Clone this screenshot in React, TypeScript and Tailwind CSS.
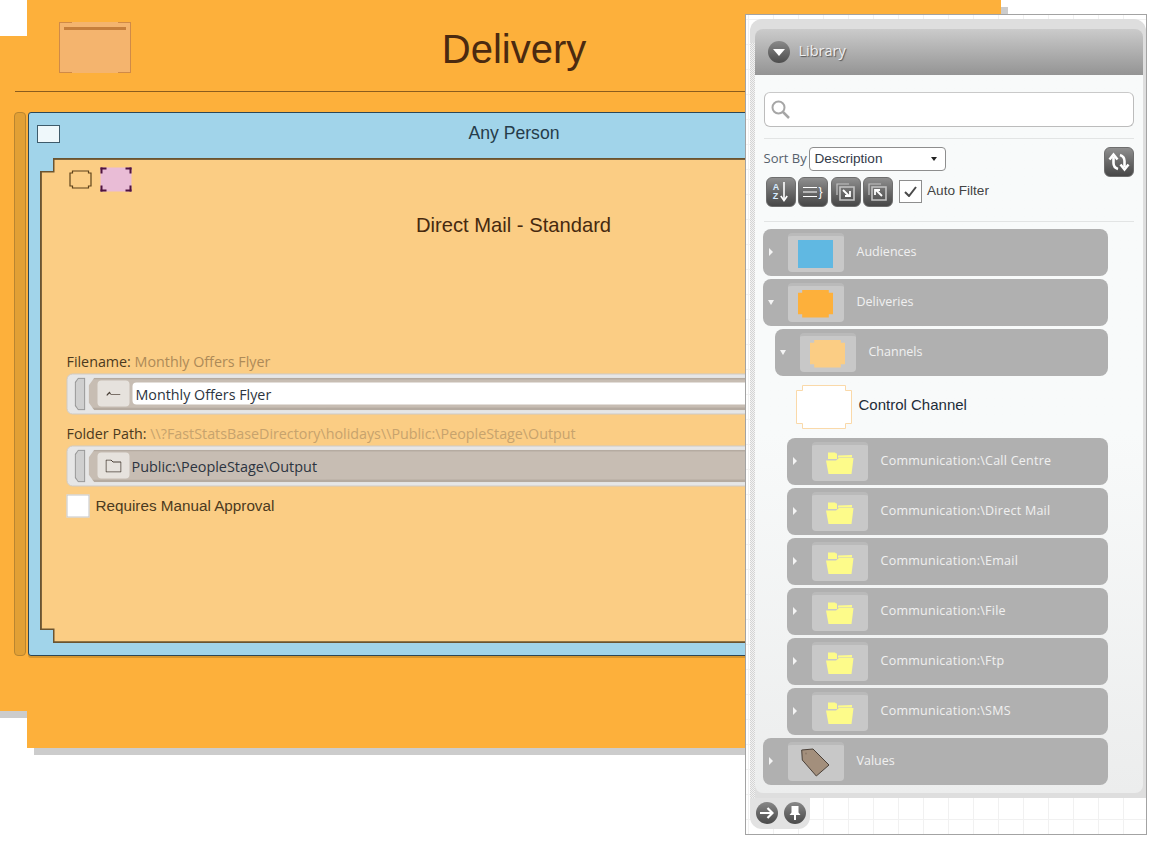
import React from "react";

const uiFont = "font-['Open_Sans','Noto_Sans',sans-serif]";
const arial = "font-['Liberation_Sans',Arial,sans-serif]";

const chamfer8 = "[clip-path:polygon(12%_0,88%_0,88%_12%,100%_12%,100%_88%,88%_88%,88%_100%,12%_100%,12%_88%,0_88%,0_12%,12%_12%)]";

function FolderIcon() {
  return (
    <svg width="28" height="22" viewBox="0 0 28 22">
      <path d="M2 .5h7l1 1h1v5.5H2z" fill="#fdfb8a" />
      <path d="M12 3.500l14-.5v2.500H12z" fill="#fdfb8a" />
      <path d="M0 8.500h10L13 6h14.500L25.500 22h-23z" fill="#fdfb8a" />
    </svg>
  );
}

function TagIcon() {
  return (
    <svg width="30" height="30" viewBox="0 0 30 30">
      <path d="M.7 2L12 1l16 16-12.700 11-14-16z" fill="#a38f7c" stroke="#4a4038" strokeWidth="1" />
      <circle cx="5" cy="5.500" r="1" fill="#8d7a69" />
    </svg>
  );
}

type RowProps = {
  label: string;
  indent?: number;
  open?: boolean;
  children: React.ReactNode;
};

function TreeRow({ label, indent = 0, open, children }: RowProps) {
  const indentClass = indent === 2 ? "ml-[24px] w-[321px]" : indent === 1 ? "ml-[12px] w-[333px]" : "w-[345px]";
  return (
    <div className={`${indentClass} h-[47px] shrink-0 rounded-lg bg-[#b0b0b0] flex items-center`}>
      <div className="w-[25px] flex justify-start shrink-0">
        {open ? (
          <div className="ml-[5px] w-0 h-0 border-x-[3.5px] border-x-transparent border-t-[5px] border-t-[#f4f4f4]" />
        ) : (
          <div className="ml-[6px] w-0 h-0 border-y-[4px] border-y-transparent border-l-[4px] border-l-[#f4f4f4]" />
        )}
      </div>
      <div className="w-[56px] h-[39px] shrink-0 rounded bg-[#c8c8c8] border-t-[3px] border-t-[#bababa] flex items-center justify-center">
        {children}
      </div>
      <span className={`ml-[13px] text-[12.5px] text-[#f0f0f0] ${indent === 2 ? "tracking-[0.26px]" : ""} ${uiFont}`}>{label}</span>
    </div>
  );
}

function DarkButton({ children }: { children: React.ReactNode }) {
  return (
    <div className="w-[30px] h-[30px] rounded-md bg-gradient-to-b from-[#8f8f8f] via-[#696969] to-[#474747] border border-[#6e6e6e] flex items-center justify-center text-white relative">
      {children}
    </div>
  );
}

function FieldBox({ children }: { children: React.ReactNode }) {
  return (
    <div className="h-[41px] w-[920px] rounded-md bg-[#e6e6e6] border border-[#cfcac4] flex items-center pl-[7px] gap-[3px]">
      <div className="w-[11px] h-[33px] bg-[#9a9a9a] [clip-path:polygon(35%_0,100%_0,100%_100%,35%_100%,0_85%,0_15%)] p-[1px]">
        <div className="w-full h-full bg-[#cfcfcf] [clip-path:polygon(35%_0,100%_0,100%_100%,35%_100%,0_85%,0_15%)]" />
      </div>
      <div className="flex-1 h-[33px] bg-[#c7bdb3] border-b-[3px] border-t-[2px] border-[#b5aba1] rounded-r flex items-center pl-[9px] [clip-path:polygon(6px_0,100%_0,100%_100%,6px_100%,0_75%,0_25%)]">
        {children}
      </div>
    </div>
  );
}

function CanvasNode() {
  const nodeShape =
    "[clip-path:polygon(34px_0,100%_0,100%_100%,34px_100%,34px_711px,0_711px,0_36px,34px_36px)]";
  return (
    <div className="absolute left-[-7px] top-0 w-[1008px] h-[748px]">
      <div className={`absolute left-[7px] top-[7px] w-[1008px] h-[748px] bg-[#cccccc] ${nodeShape}`} />
      <div className={`absolute inset-0 bg-[#fdb03b] pl-[22px] ${nodeShape}`}>
        <div className="h-[92px] border-b border-b-[#8a5c1e] flex items-center relative">
          <div className="ml-[44px] mt-[4px] w-[72px] h-[51px] bg-[#f4b46e] border-x border-x-[#cf8a48] pt-[5px] px-[4px] relative">
            <div className="h-[3px] bg-[#c67f3c]" />
            <div className="absolute left-0 top-0 w-[12px] border-t border-t-[#cf8a48]" />
            <div className="absolute right-0 top-0 w-[12px] border-t border-t-[#cf8a48]" />
            <div className="absolute left-0 bottom-0 w-[12px] border-t border-t-[#cf8a48]" />
            <div className="absolute right-0 bottom-0 w-[12px] border-t border-t-[#cf8a48]" />
          </div>
          <h1 className={`absolute left-[12px] right-[0px] text-center text-[40px] leading-none pt-[7px] text-[#4b2a10] ${arial}`}>
            Delivery
          </h1>
        </div>
        <div className="mt-[20px] flex items-start">
          <div className="ml-[-1px] w-[12px] h-[544px] rounded-[4px] bg-[#e2a035] border border-[#b98530]" />
          <div className="ml-[2px] w-[972px] h-[544px] rounded-[3px] bg-[#a1d4ea] border-[1.5px] border-[#2d4756] shadow-[0_2px_0_#d8962f]">
            <div className="h-[45px] relative flex items-center pl-[8px]">
              <div className="w-[23px] h-[18px] bg-[#eff8fb] border-[1.5px] border-[#3e5b6b] mt-[-4px]" />
              <div className={`absolute inset-x-0 top-[10px] text-center text-[17.6px] leading-[20px] text-[#263c4a] ${arial}`}>
                Any Person
              </div>
            </div>
            <div className="ml-[11px] w-[947px] h-[485px] bg-[#6b5430] [clip-path:polygon(13px_0,100%_0,100%_100%,13px_100%,13px_calc(100%-13px),0_calc(100%-13px),0_13px,13px_13px)]">
              <div className="w-full h-full pl-[25px] bg-[#fbcd84] translate-x-[1.5px] translate-y-[1.5px] [clip-path:polygon(13px_0,100%_0,100%_calc(100%-3px),13px_calc(100%-3px),13px_calc(100%-16px),0_calc(100%-16px),0_13px,13px_13px)]">
                <div className="pt-[7px] flex items-center gap-[8px] h-[33px]">
                  <svg width="24" height="20" viewBox="0 0 24 20" className="ml-[2px]" fill="none" stroke="#5f431a" strokeWidth="1.2">
                    <path d="M4 1.500h16v2h2.500v13H20v2H4v-2H1.500v-13H4z" />
                  </svg>
                  <div className="w-[31px] h-[24px] bg-[#e9bcd6] relative">
                    <div className="absolute left-0 top-0 w-[6px] h-[6px] border-l-2 border-t-2 border-[#4f1340]" />
                    <div className="absolute right-0 top-0 w-[6px] h-[6px] border-r-2 border-t-2 border-[#4f1340]" />
                    <div className="absolute left-0 bottom-0 w-[6px] h-[6px] border-l-2 border-b-2 border-[#4f1340]" />
                    <div className="absolute right-0 bottom-0 w-[6px] h-[6px] border-r-2 border-b-2 border-[#4f1340]" />
                  </div>
                </div>
                <div className={`mt-[20px] ml-[-28px] text-center text-[20.2px] leading-[24px] text-[#46290f] ${arial}`}>
                  Direct Mail - Standard
                </div>
                <div className={`mt-[115px] text-[14.3px] leading-[19px] text-[#4b3a20] ${uiFont}`}>
                  Filename: <span className="text-[#ad8a58]">Monthly Offers Flyer</span>
                </div>
                <div className="mt-[3px]">
                  <FieldBox>
                    <div className="w-[32px] h-[26px] rounded-sm bg-[#e6e2dd] flex items-center justify-center shrink-0">
                      <svg width="14" height="6" viewBox="0 0 14 6">
                        <path d="M0 5l3-3 1 1.500" fill="none" stroke="#4a4038" strokeWidth="1.2" />
                        <path d="M4 4h10" stroke="#7a7068" strokeWidth="1" />
                      </svg>
                    </div>
                    <div className={`ml-[3px] flex-1 h-[22px] bg-white rounded-l-sm pl-[3px] text-[14.3px] leading-[24px] text-[#2c3440] ${uiFont}`}>
                      Monthly Offers Flyer
                    </div>
                  </FieldBox>
                </div>
                <div className={`mt-[9px] text-[14.3px] leading-[19px] text-[#4b3a20] ${uiFont}`}>
                  Folder Path: <span className="text-[#c7a36d]">\\?FastStatsBaseDirectory\holidays\\Public:\PeopleStage\Output</span>
                </div>
                <div className="mt-[3px]">
                  <FieldBox>
                    <div className="w-[32px] h-[26px] rounded-sm bg-[#e6e2dd] flex items-center justify-center shrink-0">
                      <svg width="16" height="13" viewBox="0 0 16 13">
                        <path d="M.5 12.500V.5h5l2 2h8v10z" fill="none" stroke="#4a4038" strokeWidth="1" />
                      </svg>
                    </div>
                    <div className={`ml-[2px] mt-[2px] text-[14.4px] text-[#2c3440] ${uiFont}`}>Public:\PeopleStage\Output</div>
                  </FieldBox>
                </div>
                <div className="mt-[8px] flex items-center gap-[6px]">
                  <div className="w-[23px] h-[23px] bg-white border border-[#c4c4c4]" />
                  <span className={`text-[15.25px] text-[#4b3a20] ${arial}`}>Requires Manual Approval</span>
                </div>
              </div>
            </div>
          </div>
        </div>
      </div>
    </div>
  );
}

function Library() {
  return (
    <div className="absolute left-[745px] top-[14px] w-[402px] h-[821px] border-[1.5px] border-[#a3a3a3] bg-white bg-[linear-gradient(#f1f1f1_1px,transparent_1px),linear-gradient(90deg,#f1f1f1_1px,transparent_1px)] bg-[size:25px_25px] bg-[position:2px_4px] pl-[3.5px] pt-[3.5px]">
      <div className="w-[396px] h-[779px] rounded-t-xl rounded-bl-none bg-[#dedede] pl-[5px] pr-[3px] pt-[10px] pb-[5px] flex flex-col relative">
        <div className="absolute left-0 top-[24px] bottom-0 w-[5px] bg-[repeating-conic-gradient(#d4d4d4_0_25%,#f2f2f2_0_50%)] bg-[size:2px_2px]" />
        <div className="h-[46px] shrink-0 rounded-t-lg bg-gradient-to-b from-[#cbcbcb] to-[#949494] flex items-center pl-[13px] gap-[9px]">
          <div className="w-[22px] h-[22px] rounded-full bg-gradient-to-b from-[#8a8a8a] to-[#4d4d4d] flex items-center justify-center">
            <div className="w-0 h-0 border-x-[6px] border-x-transparent border-t-[7px] border-t-white mt-[2px]" />
          </div>
          <span className={`text-[14.5px] mt-[-2px] text-[#f0f0f0] [text-shadow:1px_1px_1px_#555] ${uiFont}`}>Library</span>
        </div>
        <div className="flex-1 rounded-b-lg bg-gradient-to-b from-[#f8fafa] via-[#f8fafa] to-[#eceded] pl-[9px] pr-[8px] pt-[17px] flex flex-col">
          <div className="w-[370px] h-[35px] rounded-md bg-white border-[1.5px] border-[#bcbcbc] border-t-[#c9c9c9] flex items-center pl-[6px] shrink-0">
            <svg width="19" height="19" viewBox="0 0 19 19" fill="none" stroke="#a6a6a6" strokeWidth="2">
              <circle cx="7.500" cy="7.500" r="6" />
              <path d="M12 12l6 6" strokeWidth="2.500" />
            </svg>
          </div>
          <div className="w-[370px] border-b border-b-[#e2e4e4] mt-[11px] shrink-0" />
          <div className="w-[370px] mt-[8px] h-[60px] shrink-0 relative">
            <div className="flex items-center h-[24px]">
              <span className={`text-[13px] text-[#56606c] w-[45px] whitespace-nowrap ${uiFont}`}>Sort By</span>
              <div className={`w-[137px] h-[24px] bg-white border border-[#8e8e8e] rounded-sm flex items-center pl-[5px] pt-[1px] text-[13.6px] text-[#333a48] relative ${arial}`}>
                Description
                <div className="absolute right-[8px] top-[9px] w-0 h-0 border-x-[3px] border-x-transparent border-t-[4px] border-t-[#222]" />
              </div>
            </div>
            <div className="absolute right-0 top-0">
              <DarkButton>
                <svg width="22" height="20" viewBox="0 0 22 20" fill="none" stroke="white" strokeWidth="2.6">
                  <path d="M10 17C7 16 5.500 14 5.500 11V5" />
                  <path d="M1.500 7.500L5.500 2.500l4 5" />
                  <path d="M12 3c3 1 4.500 3 4.500 6v6" />
                  <path d="M12.500 12.500l4 5 4-5" />
                </svg>
              </DarkButton>
            </div>
            <div className="flex items-center gap-[2.5px] mt-[6px] pl-[2px]">
              <DarkButton>
                <div className={`flex flex-col text-[9px] leading-[9px] font-bold text-[#d8ecff] mr-[1px] ${arial}`}>
                  <span>A</span>
                  <span>Z</span>
                </div>
                <svg width="8" height="20" viewBox="0 0 8 20" fill="none" stroke="white" strokeWidth="1.6">
                  <path d="M4 0v18" />
                  <path d="M.8 14L4 18.500 7.200 14" />
                </svg>
              </DarkButton>
              <DarkButton>
                <svg width="15" height="12" viewBox="0 0 15 12" stroke="white" strokeWidth="1.2">
                  <path d="M0 1.500h14M0 6h14M0 10.500h14" />
                </svg>
                <span className={`text-[12px] leading-none ${arial}`}>{"}"}</span>
              </DarkButton>
              <DarkButton>
                <svg width="20" height="18" viewBox="0 0 20 18" fill="none" stroke="#c4c4c4" strokeWidth="1.2">
                  <path d="M1 12V1h12" />
                  <path d="M4 4h14v13H4z" strokeWidth="1.6" />
                  <path d="M7 7l6 6M14 8v5H9" stroke="white" strokeWidth="1.8" />
                </svg>
              </DarkButton>
              <DarkButton>
                <svg width="20" height="18" viewBox="0 0 20 18" fill="none" stroke="#c4c4c4" strokeWidth="1.2">
                  <path d="M1 12V1h12" />
                  <path d="M4 4h14v13H4z" strokeWidth="1.6" />
                  <path d="M14 13L8 7M7 12V7h5" stroke="white" strokeWidth="1.8" />
                </svg>
              </DarkButton>
              <div className="ml-[3px] w-[23px] h-[23px] bg-white border border-[#8e8e8e] flex items-center justify-center">
                <svg width="13" height="11" viewBox="0 0 13 11" fill="none" stroke="#4a4a4a" strokeWidth="2">
                  <path d="M1 6l4 4 7-9" />
                </svg>
              </div>
              <span className={`ml-[3px] text-[13.6px] text-[#444444] ${arial}`}>Auto Filter</span>
            </div>
          </div>
          <div className="w-[370px] border-b border-b-[#e2e4e4] mt-[14px] shrink-0" />
          <div className="mt-[7px] ml-[-1px] flex flex-col gap-[3px]">
            <TreeRow label="Audiences">
              <div className="w-[35px] h-[28px] bg-[#60b8e2]" />
            </TreeRow>
            <TreeRow label="Deliveries" open>
              <div className={`w-[35px] h-[28px] bg-[#fdb03b] ${chamfer8}`} />
            </TreeRow>
            <TreeRow label="Channels" indent={1} open>
              <div className={`w-[35px] h-[28px] bg-[#fbcd84] ${chamfer8}`} />
            </TreeRow>
            <div className="ml-[33px] h-[56px] flex items-center gap-[7px] shrink-0">
              <svg width="56" height="44" viewBox="0 0 56 44">
                <path d="M6.500.5h43v5h6v33h-6v5h-43v-5h-6v-33h6z" fill="white" stroke="#fad9a9" strokeWidth="1" />
              </svg>
              <span className={`text-[15px] mt-[-2px] text-[#222c38] ${arial}`}>Control Channel</span>
            </div>
            {["Call Centre", "Direct Mail", "Email", "File", "Ftp", "SMS"].map((name) => (
              <TreeRow key={name} label={`Communication:\\${name}`} indent={2}>
                <FolderIcon />
              </TreeRow>
            ))}
            <TreeRow label="Values">
              <TagIcon />
            </TreeRow>
          </div>
        </div>
      </div>
      <div className="w-[60px] h-[31px] rounded-b-xl bg-[#e2e2e2] flex items-center pl-[6px] gap-[6px]">
        <div className="w-[22px] h-[22px] rounded-full bg-gradient-to-b from-[#888888] to-[#4a4a4a] flex items-center justify-center">
          <svg width="14" height="12" viewBox="0 0 14 12" fill="none" stroke="white" strokeWidth="2.2">
            <path d="M0 6h12M7.500 1L12.500 6 7.500 11" />
          </svg>
        </div>
        <div className="w-[22px] h-[22px] rounded-full bg-gradient-to-b from-[#888888] to-[#4a4a4a] flex items-center justify-center">
          <svg width="12" height="14" viewBox="0 0 12 14" fill="white">
            <path d="M2.500 0h7v6.500l2 2.500H.5l2-2.500z" />
            <path d="M5 9h2v5H5z" />
          </svg>
        </div>
      </div>
    </div>
  );
}

export default function App() {
  return (
    <div className="relative w-[1155px] h-[842px] bg-white overflow-hidden">
      <CanvasNode />
      <Library />
    </div>
  );
}
